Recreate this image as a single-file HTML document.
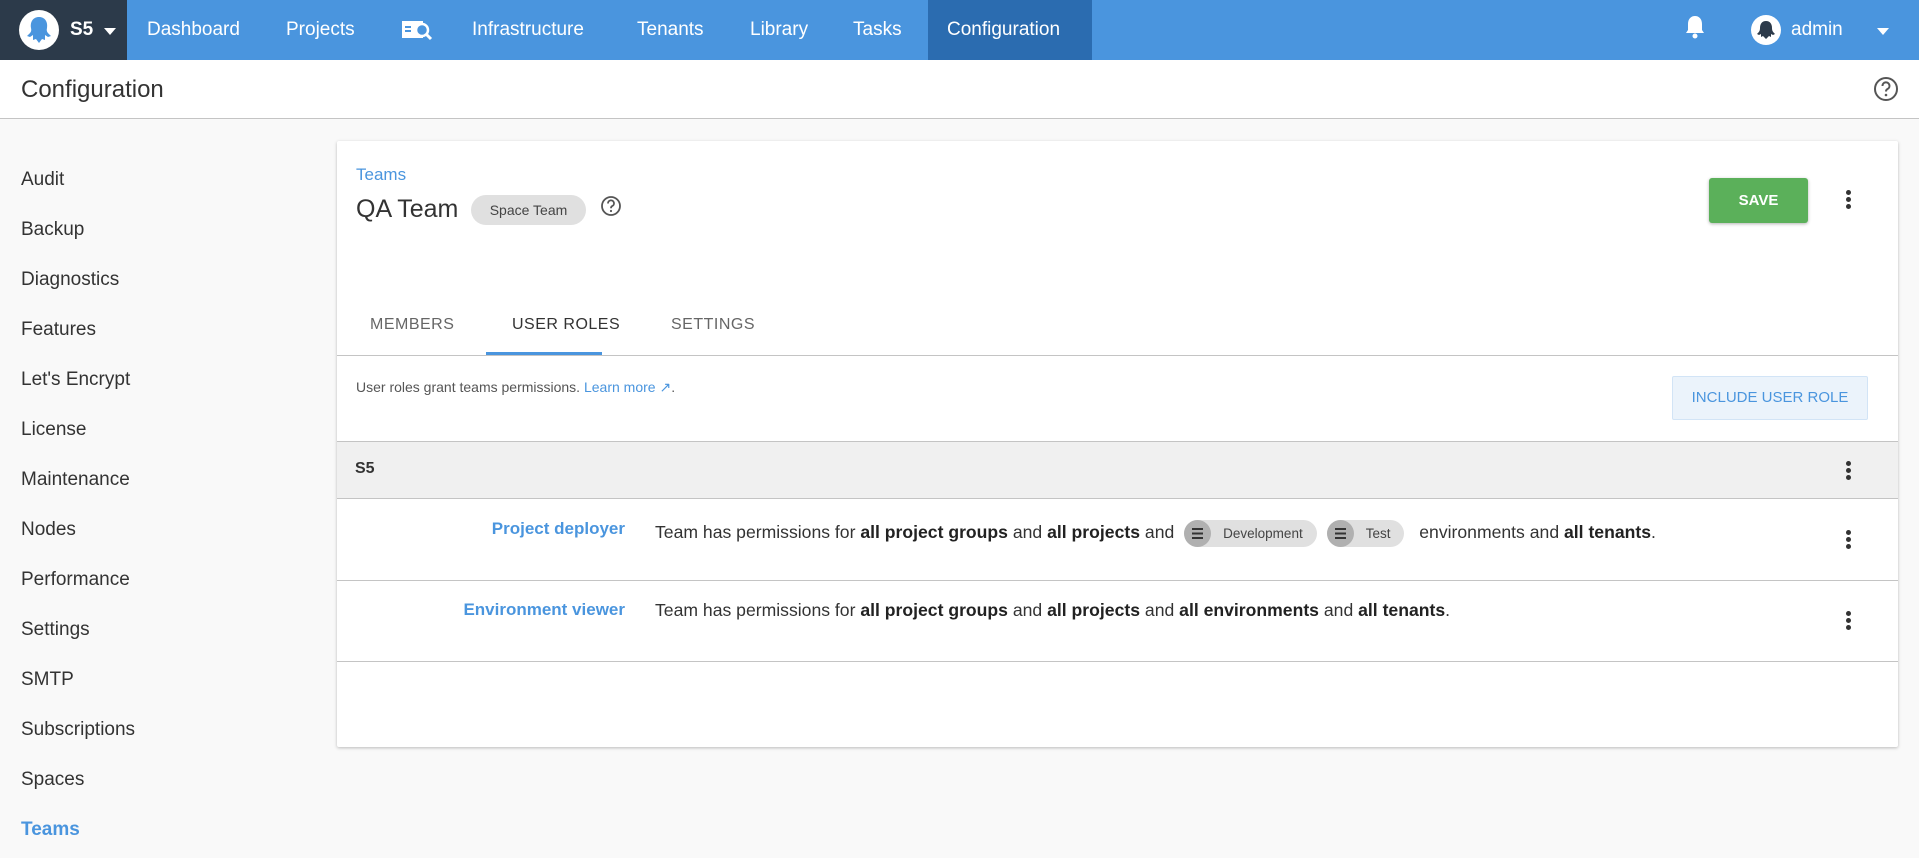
<!DOCTYPE html>
<html><head><meta charset="utf-8"><style>
*{box-sizing:border-box;margin:0;padding:0}
body{width:1919px;height:858px;overflow:hidden;background:#f9f9f9;font-family:"Liberation Sans",sans-serif;color:#333;position:relative}
.a{position:absolute;white-space:nowrap}
.nt{position:absolute;color:#fff;font-size:19px;top:19px;white-space:nowrap}
.side{left:21px;font-size:19px;color:#333}
.card{left:337px;top:141px;width:1561px;height:606px;background:#fff;box-shadow:0 1px 3px rgba(0,0,0,.25);border-radius:2px}
.tab{font-size:16px;letter-spacing:.5px;color:#666;top:316px}
.desc{font-size:17.6px;color:#333}
.desc b{color:#222}
.chip{display:inline-block;background:#e0e0e0;border-radius:14px;height:27px;line-height:27px;font-size:13.5px;color:#444;padding:0 14px 0 0;vertical-align:middle;margin:0 5px}
.chip i{display:inline-block;width:27px;height:27px;border-radius:50%;background:#b0b0b0;vertical-align:top;margin-right:12px;position:relative}
.chip i:after{content:"";position:absolute;left:8px;top:8px;width:11px;height:11px;background:repeating-linear-gradient(#333 0 2px,transparent 2px 4.5px)}
.keb{width:4px}
.keb span{display:block;width:5px;height:5px;border-radius:50%;background:#333;margin-bottom:2px}
</style></head><body>
<div class="a" style="left:0;top:0;width:1919px;height:60px;background:#4a95de"></div>
<div class="a" style="left:0;top:0;width:127px;height:60px;background:#2c3a4a"></div>
<svg class="a" style="left:19px;top:10px" width="40" height="40" viewBox="0 0 40 40"><circle cx="20" cy="20" r="20" fill="#fff"/><path d="M20 7c6 0 9 5 8 11-1 4 1 5 4 8l-3 1-3-2 0 5-3-1-3 4-3-4-3 1 0-5-3 2-3-1c3-3 5-4 4-8-1-6 2-11 8-11z" fill="#4a95de"/></svg>
<div class="a" style="left:70px;top:19px;color:#fff;font-size:19px;font-weight:bold">S5</div>
<div class="a" style="left:104px;top:28px;border:6px solid transparent;border-top:7px solid #fff"></div>
<div class="nt" style="left:147px">Dashboard</div>
<div class="nt" style="left:286px">Projects</div>
<svg class="a" style="left:401px;top:19px" width="32" height="22" viewBox="0 0 32 22"><rect x="1" y="2" width="21" height="17" fill="#fff"/><rect x="4" y="7" width="6" height="2" fill="#4a95de"/><rect x="4" y="11" width="6" height="2" fill="#4a95de"/><circle cx="21" cy="11" r="6" fill="#4a95de" stroke="#fff" stroke-width="2.5"/><path d="M25 15l5 5" stroke="#fff" stroke-width="3"/></svg>
<div class="nt" style="left:472px">Infrastructure</div>
<div class="nt" style="left:637px">Tenants</div>
<div class="nt" style="left:750px">Library</div>
<div class="nt" style="left:853px">Tasks</div>
<div class="a" style="left:928px;top:0;width:164px;height:60px;background:#2b6cb0"></div>
<div class="nt" style="left:947px">Configuration</div>
<svg class="a" style="left:1684px;top:14px" width="22" height="26" viewBox="0 0 22 26"><path d="M11 2c-4 0-7 3-7 8v6l-2 3h18l-2-3v-6c0-5-3-8-7-8z" fill="#fff"/><circle cx="11" cy="22" r="2.5" fill="#fff"/></svg>
<svg class="a" style="left:1751px;top:15px" width="30" height="30" viewBox="0 0 30 30"><circle cx="15" cy="15" r="15" fill="#fff"/><path d="M15 6c4 0 6 3 6 7 0 3 1 4 3 6l-2 1-2-1 0 3-2-1-3 3-3-3-2 1 0-3-2 1-2-1c2-2 3-3 3-6 0-4 2-7 6-7z" fill="#2c3a4a"/></svg>
<div class="nt" style="left:1791px">admin</div>
<div class="a" style="left:1877px;top:28px;border:6px solid transparent;border-top:7px solid #fff"></div>

<div class="a" style="left:0;top:60px;width:1919px;height:59px;background:#fff;border-bottom:1px solid #c4c4c4"></div>
<div class="a" style="left:21px;top:76px;font-size:24px;color:#333">Configuration</div>
<svg class="a" style="left:1873px;top:76px" width="26" height="26" viewBox="0 0 26 26"><circle cx="13" cy="13" r="11" fill="none" stroke="#555" stroke-width="2"/><path d="M9.5 10a3.5 3.5 0 1 1 5 3c-1.2.6-1.5 1.300-1.5 2.5" fill="none" stroke="#555" stroke-width="2"/><circle cx="13" cy="19" r="1.3" fill="#555"/></svg>

<div class="a side" style="top:169px">Audit</div>
<div class="a side" style="top:219px">Backup</div>
<div class="a side" style="top:269px">Diagnostics</div>
<div class="a side" style="top:319px">Features</div>
<div class="a side" style="top:369px">Let's Encrypt</div>
<div class="a side" style="top:419px">License</div>
<div class="a side" style="top:469px">Maintenance</div>
<div class="a side" style="top:519px">Nodes</div>
<div class="a side" style="top:569px">Performance</div>
<div class="a side" style="top:619px">Settings</div>
<div class="a side" style="top:669px">SMTP</div>
<div class="a side" style="top:719px">Subscriptions</div>
<div class="a side" style="top:769px">Spaces</div>
<div class="a side" style="top:819px;color:#4a95de;font-weight:bold">Teams</div>

<div class="a card"></div>
<div class="a" style="left:356px;top:165px;font-size:17px;color:#4a95de">Teams</div>
<div class="a" style="left:356px;top:195px;font-size:25px;color:#333">QA Team</div>
<div class="a" style="left:471px;top:195px;width:115px;height:30px;border-radius:15px;background:#e0e0e0;font-size:14px;color:#444;text-align:center;line-height:30px">Space Team</div>
<svg class="a" style="left:600px;top:195px" width="22" height="22" viewBox="0 0 22 22"><circle cx="11" cy="11" r="9" fill="none" stroke="#555" stroke-width="1.8"/><path d="M8 8.5a3 3 0 1 1 4.2 2.6c-1 .5-1.2 1.1-1.2 2.2" fill="none" stroke="#555" stroke-width="1.8"/><circle cx="11" cy="16" r="1.1" fill="#555"/></svg>
<div class="a" style="left:1709px;top:178px;width:99px;height:45px;background:#5bb05a;border-radius:3px;box-shadow:0 1px 3px rgba(0,0,0,.3);color:#fff;font-weight:bold;font-size:15px;text-align:center;line-height:45px">SAVE</div>
<div class="a keb" style="left:1846px;top:190px"><span></span><span></span><span></span></div>

<div class="a tab" style="left:370px">MEMBERS</div>
<div class="a tab" style="left:512px;color:#333">USER ROLES</div>
<div class="a tab" style="left:671px">SETTINGS</div>
<div class="a" style="left:486px;top:352px;width:116px;height:3px;background:#4a95de"></div>
<div class="a" style="left:337px;top:355px;width:1561px;height:1px;background:#c4c4c4"></div>
<div class="a" style="left:356px;top:379px;font-size:14px;color:#555">User roles grant teams permissions. <span style="color:#4a95de">Learn more ↗</span>.</div>
<div class="a" style="left:1672px;top:376px;width:196px;height:44px;background:#ebf3fb;border:1px solid #d2e4f6;border-radius:2px;color:#4a95de;font-size:15px;text-align:center;line-height:42px">INCLUDE USER ROLE</div>

<div class="a" style="left:337px;top:441px;width:1561px;height:58px;background:#f0f0f0;border-top:1px solid #c4c4c4;border-bottom:1px solid #c4c4c4"></div>
<div class="a" style="left:355px;top:460px;font-size:16px;font-weight:bold;color:#333">S5</div>
<div class="a keb" style="left:1846px;top:461px"><span></span><span></span><span></span></div>

<div class="a" style="left:337px;top:580px;width:1561px;height:1px;background:#c4c4c4"></div>
<div class="a" style="left:337px;top:661px;width:1561px;height:1px;background:#c4c4c4"></div>
<div class="a" style="left:400px;width:225px;text-align:right;top:519px;font-size:17px;font-weight:bold;color:#4a95de">Project deployer</div>
<div class="a desc" style="left:655px;top:520px">Team has permissions for <b>all project groups</b> and <b>all projects</b> and <span class="chip"><i></i>Development</span><span class="chip"><i></i>Test</span> &nbsp;environments and <b>all tenants</b>.</div>
<div class="a keb" style="left:1846px;top:530px"><span></span><span></span><span></span></div>
<div class="a" style="left:400px;width:225px;text-align:right;top:600px;font-size:17px;font-weight:bold;color:#4a95de">Environment viewer</div>
<div class="a desc" style="left:655px;top:600px">Team has permissions for <b>all project groups</b> and <b>all projects</b> and <b>all environments</b> and <b>all tenants</b>.</div>
<div class="a keb" style="left:1846px;top:611px"><span></span><span></span><span></span></div>
</body></html>
